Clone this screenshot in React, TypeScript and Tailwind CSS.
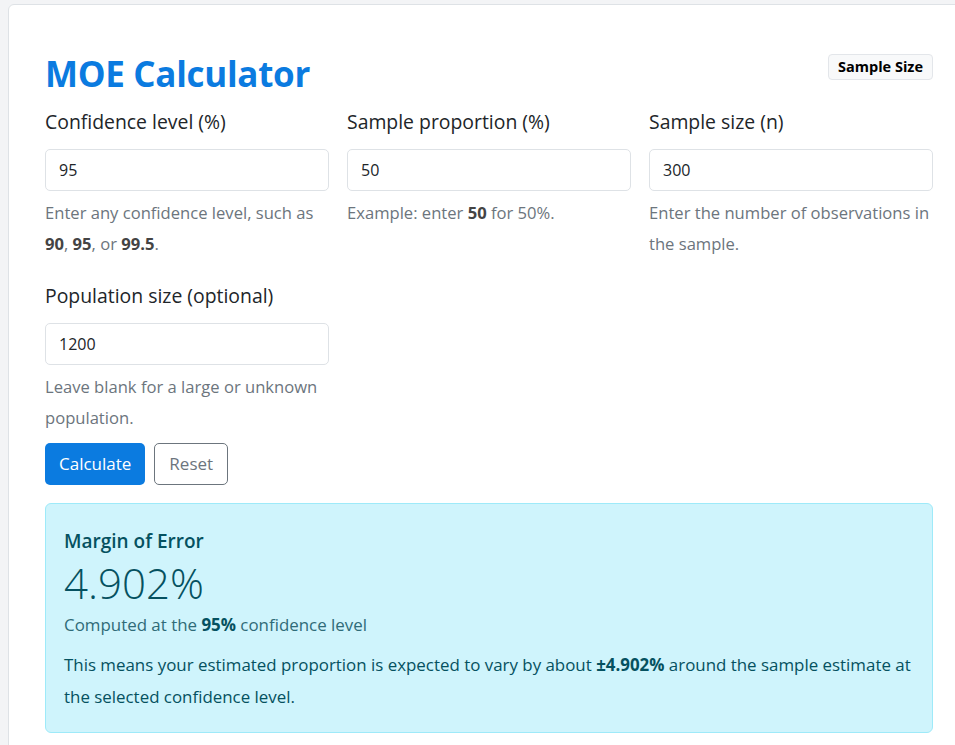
import React from "react";

export default function App() {
  const font = { fontFamily: '"Open Sans", "Noto Sans", sans-serif' };
  return (
    <div className="min-h-[745px] bg-[#f3f4f6] pl-2 pt-1" style={font}>
      <div className="w-[960px] bg-white border border-[#dee2e6] rounded-tl-md pl-[36px] pr-[28px] pt-[50px] pb-6">
        <div className="w-[888px]">
          <div className="flex items-start justify-between">
            <h1 className="-mt-[5px] text-[35px] leading-[48px] font-bold text-[#0b7be0] tracking-[-0.3px]">MOE Calculator</h1>
            <button className="-mt-[1px] h-[26px] px-[9px] rounded-[4px] border border-[#e3e6ea] bg-[#f8f9fa] text-[14.5px] font-bold text-black leading-none">
              Sample Size
            </button>
          </div>
          <div className="grid grid-cols-3 gap-x-[18px] mt-[11px]">
            <Field label="Confidence level (%)" value="95">
              Enter any confidence level, such as <b className="text-[#444]">90</b>, <b className="text-[#444]">95</b>, or <b className="text-[#444]">99.5</b>.
            </Field>
            <Field label="Sample proportion (%)" value="50">
              Example: enter <b className="text-[#444]">50</b> for 50%.
            </Field>
            <Field label="Sample size (n)" value="300">
              Enter the number of observations in the sample.
            </Field>
          </div>
          <div className="grid grid-cols-3 gap-x-[18px] mt-[24px]">
            <Field label="Population size (optional)" value="1200">
              Leave blank for a large or unknown population.
            </Field>
          </div>
          <div className="flex gap-[9px] mt-[10px]">
            <button className="h-[42px] px-[14px] rounded-[5px] bg-[#0b7be0] text-white text-[17px]">Calculate</button>
            <button className="h-[42px] px-[14px] rounded-[5px] border border-[#6c757d] bg-white text-[#6c757d] text-[17px]">Reset</button>
          </div>
          <div className="mt-[18px] rounded-[6px] border border-[#9eeaf9] bg-[#cff4fc] text-[#055160] px-[18px] pt-[24px] pb-[19px]">
            <div className="text-[19px] font-semibold leading-[26px]">Margin of Error</div>
            <div className="text-[42px] font-light leading-[52px] mt-[3px]">4.902%</div>
            <div className="text-[16.9px] leading-[26px] mt-[3px] text-[#2f6b78]">
              Computed at the <b className="text-[#055160]">95%</b> confidence level
            </div>
            <p className="text-[16.9px] leading-[32px] mt-[11px]">
              This means your estimated proportion is expected to vary by about <b>±4.902%</b> around the sample estimate at the selected confidence level.
            </p>
          </div>
        </div>
      </div>
    </div>
  );
}

function Field({ label, value, children }: { label: string; value: string; children: React.ReactNode }) {
  return (
    <div>
      <div className="text-[19.4px] leading-[26px] text-[#212529]">{label}</div>
      <input
        readOnly
        value={value}
        className="mt-[14px] w-full h-[42px] rounded-[5px] border border-[#dee2e6] px-[13px] text-[16px] text-[#212529] outline-none"
      />
      <div className="mt-[6px] text-[16.6px] leading-[31px] text-[#6c757d]">{children}</div>
    </div>
  );
}
